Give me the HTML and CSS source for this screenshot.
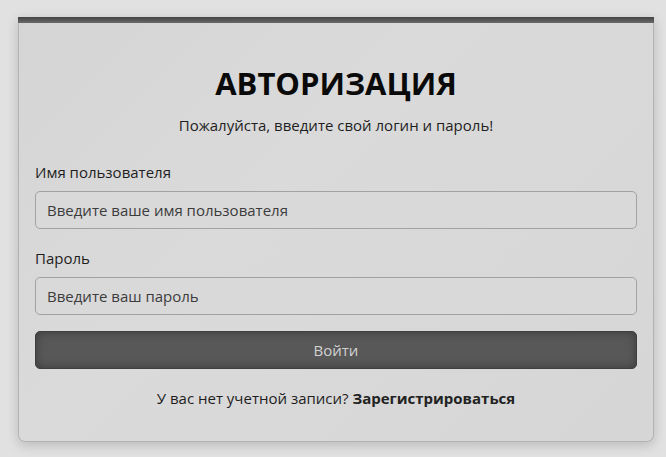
FILE: index.html
```html
<!DOCTYPE html>
<html lang="ru">
<head>
<meta charset="utf-8">
<title>Авторизация</title>
<link rel="stylesheet" href="styles.css">
</head>
<body>
<div class="wrap">
  <div class="card">
    <div class="card-bar"></div>
    <form class="card-body">
      <h1 class="title">АВТОРИЗАЦИЯ</h1>
      <p class="subtitle">Пожалуйста, введите свой логин и пароль!</p>
      <label class="label" for="user">Имя пользователя</label>
      <input class="field" id="user" type="text" placeholder="Введите ваше имя пользователя">
      <label class="label label-second" for="pass">Пароль</label>
      <input class="field" id="pass" type="password" placeholder="Введите ваш пароль">
      <button class="btn" type="button">Войти</button>
      <p class="footer">У вас нет учетной записи? <a class="link" href="#">Зарегистрироваться</a></p>
    </form>
  </div>
</div>
</body>
</html>
```
FILE: styles.css
```css
* { box-sizing: border-box; }
html, body { margin: 0; padding: 0; }
body {
  background: #e1e1e1;
  font-family: "Open Sans", "Noto Sans", sans-serif;
  color: #222;
}
.wrap {
  padding: 17px 12px 16px 18px;
}
.card {
  background: linear-gradient(135deg, #d5d5d5 0%, #dadada 40%, #d6d6d6 100%);
  border: 1px solid #b3b3b3;
  border-top: none;
  border-radius: 0 0 7px 7px;
  box-shadow: 0 3px 12px rgba(0,0,0,0.18);
}
.card-bar {
  height: 6px;
  margin: 0 -1px;
  background: linear-gradient(#444, #5a5a5a 60%, #6a6a6a);
}
.card-body {
  display: flex;
  flex-direction: column;
  padding: 40px 16px 32px 16px;
  margin: 0;
}
.title {
  margin: 0;
  font-size: 31px;
  line-height: 40px;
  font-weight: 700;
  text-align: center;
  color: #0a0a0a;
}
.subtitle {
  margin: 11px 0 0;
  font-size: 15px;
  line-height: 22px;
  text-align: center;
  color: #1e1e1e;
}
.label {
  margin-top: 25px;
  font-size: 15px;
  line-height: 22px;
  color: #1e1e1e;
}
.label-second { margin-top: 18px; }
.field {
  margin-top: 8px;
  height: 38px;
  padding: 0 11px;
  border: 1px solid #a2a2a2;
  border-radius: 5px;
  background: #d9d9d9;
  font-family: inherit;
  font-size: 15px;
  color: #333;
  outline: none;
}
.field::placeholder { color: #3c3c3c; opacity: 1; }
.btn {
  margin-top: 16px;
  height: 38px;
  border: 1px solid #3e3e3e;
  border-radius: 5px;
  background: #585858;
  box-shadow: inset 0 0 10px rgba(0,0,0,0.35);
  color: #d2d2d2;
  font-family: inherit;
  font-size: 15px;
  cursor: pointer;
}
.footer {
  margin: 18px 0 0;
  font-size: 15px;
  line-height: 22px;
  text-align: center;
  color: #1e1e1e;
}
.link {
  color: #222;
  font-weight: 700;
  text-decoration: none;
}
```
